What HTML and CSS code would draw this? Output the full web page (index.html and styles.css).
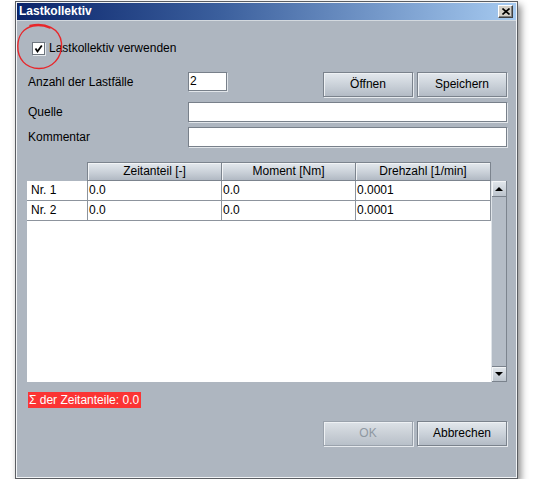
FILE: index.html
```html
<!DOCTYPE html>
<html lang="de">
<head>
<meta charset="utf-8">
<title>Lastkollektiv</title>
<link rel="stylesheet" href="styles.css">
</head>
<body>
<div class="window">
  <div class="titlebar">
    <span class="title">Lastkollektiv</span>
    <span class="close">
      <svg width="8" height="7" viewBox="0 0 8 7"><path d="M0.5 0.5 L7.5 6.5 M7.5 0.5 L0.5 6.5" stroke="#000" stroke-width="1.6" fill="none"/></svg>
    </span>
  </div>
  <div class="content">
    <div class="check-row">
      <span class="checkbox">
        <svg width="11" height="11" viewBox="0 0 11 11"><path d="M2.5 5.5 L4.5 8.5 L8.8 2.5" stroke="#000" stroke-width="1.8" fill="none"/></svg>
      </span>
      <span class="check-label">Lastkollektiv verwenden</span>
    </div>

    <div class="row row-top">
      <span class="label">Anzahl der Lastfälle</span>
      <span class="field field-small">2</span>
      <span class="grow"></span>
      <span class="btn">Öffnen</span>
      <span class="btn">Speichern</span>
    </div>
    <div class="row row-field">
      <span class="label">Quelle</span>
      <span class="field field-wide"></span>
    </div>
    <div class="row row-field">
      <span class="label">Kommentar</span>
      <span class="field field-wide"></span>
    </div>

    <div class="table-area">
      <div class="thead">
        <span class="th-blank"></span>
        <span class="th">Zeitanteil [-]</span>
        <span class="th">Moment [Nm]</span>
        <span class="th">Drehzahl [1/min]</span>
      </div>
      <span class="corner"></span>
      <div class="tbody">
        <div class="tr">
          <span class="td rowhead">Nr. 1</span>
          <span class="td">0.0</span>
          <span class="td">0.0</span>
          <span class="td">0.0001</span>
        </div>
        <div class="tr">
          <span class="td rowhead">Nr. 2</span>
          <span class="td">0.0</span>
          <span class="td">0.0</span>
          <span class="td">0.0001</span>
        </div>
      </div>
      <div class="scrollbar">
        <span class="sb-btn"><svg width="8" height="5" viewBox="0 0 8 5"><path d="M0 5 L4 1 L8 5 Z" fill="#000"/></svg></span>
        <span class="sb-track"></span>
        <span class="sb-btn"><svg width="8" height="5" viewBox="0 0 8 5"><path d="M0 0 L8 0 L4 4 Z" fill="#000"/></svg></span>
      </div>
    </div>

    <div class="sum-row"><span class="sum">Σ der Zeitanteile: 0.0</span></div>

    <div class="row row-bottom">
      <span class="grow"></span>
      <span class="btn btn-disabled">OK</span>
      <span class="btn">Abbrechen</span>
    </div>
  </div>
</div>
<svg class="annotation" width="80" height="80" viewBox="0 0 80 80">
  <path d="M30 25.5 C 45 22, 60 28, 61.5 43 C 62.5 58, 52 68.5, 39 68.5 C 26 68.5, 17.5 59, 17.8 46 C 18 35, 24 28, 33 26 C 38 25, 44 25.5, 50 28" stroke="#e8262a" stroke-width="1.4" fill="none" stroke-linecap="round"/>
</svg>
</body>
</html>
```
FILE: styles.css
```css
* { box-sizing: border-box; }

html, body {
  margin: 0;
  background: #ffffff;
}

body {
  padding: 1px 0 0 15px;
  font-family: "Liberation Sans", Arial, sans-serif;
  font-size: 12px;
  color: #000;
}

.window {
  width: 503px;
  height: 478px;
  border: 1px solid #5a5d62;
  padding: 1px;
  background: #f2f4f6;
  box-shadow: 3px 4px 7px rgba(0, 0, 0, 0.45);
  display: flex;
  flex-direction: column;
}

.titlebar {
  height: 18px;
  border-bottom: 1px solid #d3d9df;
  background: linear-gradient(to right, #0a246a, #3a5e9c 40%, #a6caf0);
  display: flex;
  align-items: center;
  padding: 0 2px 0 2px;
}

.title {
  color: #fff;
  font-weight: bold;
  font-size: 12px;
  line-height: 17px;
  flex: 1;
}

.close {
  width: 15px;
  height: 13px;
  background: #d4d0c8;
  border-top: 1px solid #ffffff;
  border-left: 1px solid #ffffff;
  border-right: 1px solid #404040;
  border-bottom: 1px solid #404040;
  box-shadow: inset -1px -1px 0 #808080;
  display: flex;
  align-items: center;
  justify-content: center;
  margin-right: 1px;
}

.content {
  flex: 1;
  background: #aeb6c0;
  padding: 0 9px 0 10px;
  display: flex;
  flex-direction: column;
}

.check-row {
  margin-top: 21px;
  margin-left: 5px;
  height: 13px;
  display: flex;
  align-items: center;
  gap: 4px;
}

.checkbox {
  width: 13px;
  height: 13px;
  background: #fff;
  border: 1px solid #6e767f;
  box-shadow: 1px 1px 0 #e4e8ec;
  display: flex;
  align-items: center;
  justify-content: center;
}

.check-label {
  line-height: 13px;
}

.row {
  display: flex;
  align-items: flex-start;
}

.row-top {
  margin-top: 17px;
  height: 25px;
}

.row-field {
  margin-top: 5px;
  height: 20px;
}

.label {
  width: 161px;
  flex: none;
  padding-left: 1px;
  padding-top: 1px;
  line-height: 19px;
}

.field {
  height: 20px;
  background: #fff;
  border: 1px solid #78808a;
  box-shadow: 1px 1px 0 #e2e6ea;
  line-height: 18px;
  padding-left: 1px;
}

.field-small {
  width: 39px;
  height: 19px;
  line-height: 17px;
}

.field-wide {
  flex: 1;
}

.grow { flex: 1; }

.btn {
  width: 90px;
  height: 25px;
  margin-left: 4px;
  border: 1px solid #7a828c;
  box-shadow: 1px 1px 0 #e6eaee, inset 1px 1px 0 #eef1f4;
  background: linear-gradient(#e3e8ed, #c9d0d8 55%, #b3bbc5);
  display: flex;
  align-items: center;
  justify-content: center;
  line-height: 23px;
}

.btn-disabled {
  color: #8f98a2;
  border-color: #9aa2ac;
  background: linear-gradient(#dde2e7, #c8ced5 55%, #b8c0c9);
}

.table-area {
  margin-top: 15px;
  height: 220px;
  display: grid;
  grid-template-columns: 464px 16px;
  grid-template-rows: 19px 201px;
}

.thead {
  display: grid;
  grid-template-columns: 60px 135px 134px 135px;
}

.th {
  border: 1px solid #7c848e;
  border-left: none;
  background: linear-gradient(#e4e9ee, #c7ced6 60%, #b1b9c3);
  box-shadow: inset 1px 1px 0 #f2f4f6;
  text-align: center;
  line-height: 17px;
}

.thead .th:nth-child(2) {
  border-left: 1px solid #7c848e;
}

.tbody {
  background: #fff;
}

.tr {
  display: grid;
  grid-template-columns: 61px 134px 134px 135px;
  height: 20px;
}

.td {
  border-right: 1px solid #8d949d;
  border-bottom: 1px solid #8d949d;
  line-height: 19px;
  padding-left: 1px;
  white-space: nowrap;
  overflow: hidden;
}

.td.rowhead {
  padding-left: 4px;
}

.scrollbar {
  display: flex;
  flex-direction: column;
  background: #b4bcc6;
  border-left: 1px solid #dfe4e9;
  border-right: 1px solid #7c848e;
}

.sb-btn {
  height: 16px;
  border: 1px solid #7a828c;
  border-left: none;
  border-right: none;
  background: linear-gradient(#e3e8ed, #bcc4cd);
  box-shadow: inset 1px 1px 0 #f3f5f7;
  display: flex;
  align-items: center;
  justify-content: center;
}

.sb-btn:first-child {
  border-top: none;
}

.sb-track {
  flex: 1;
}

.sum-row {
  margin-top: 10px;
  display: flex;
}

.sum {
  margin-left: 1px;
  height: 16px;
  line-height: 16px;
  padding: 0 2px 0 1px;
  background: #fb3434;
  color: #fff;
}

.row-bottom {
  margin-top: 13px;
  height: 25px;
}

.annotation {
  position: absolute;
  left: 0;
  top: 0;
}
```
